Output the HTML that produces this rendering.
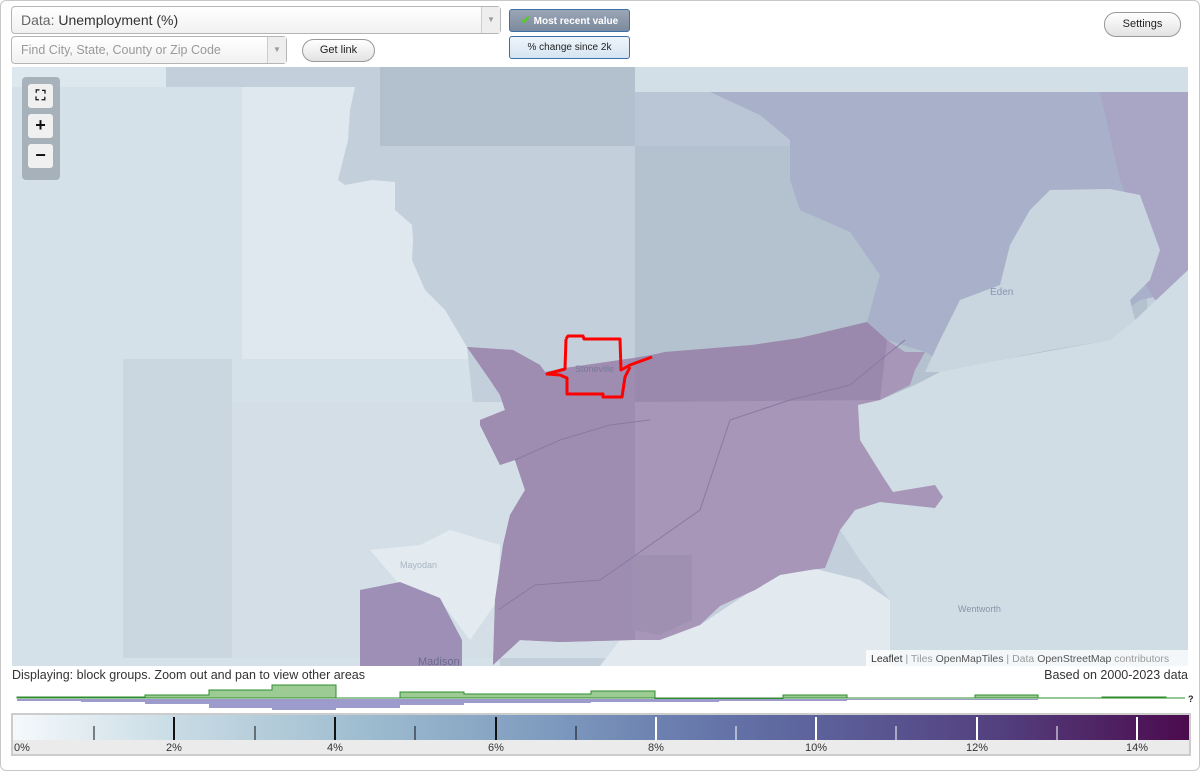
<!DOCTYPE html>
<html><head><meta charset="utf-8"><style>
*{box-sizing:border-box;margin:0;padding:0}
body{width:1200px;height:771px;background:#fff;font-family:"Liberation Sans",Arial,sans-serif;position:relative;overflow:hidden}
.frame{position:absolute;left:0;top:0;width:1200px;height:771px;border:1px solid #c8c8c8;border-radius:6px}
.sel{position:absolute;border:1px solid #b5b5b5;border-radius:4px;background:linear-gradient(#fff,#f1f1f1);font-size:14px;color:#333}
.arr{position:absolute;right:0;top:0;bottom:0;width:19px;border-left:1px solid #ccc;background:#eee;color:#999;font-size:8px;text-align:center}
.btn{position:absolute;border:1px solid #999;border-radius:12px;background:linear-gradient(#fff,#e2e2e2);font-size:11px;color:#222;text-align:center}
.tg{position:absolute;border:1px solid #3d6fa8;border-radius:3px;font-size:10px;text-align:center}
.zc{position:absolute;left:22px;top:77px;width:38px;height:103px;background:rgba(150,160,170,.75);border-radius:4px}
.zb{position:absolute;left:6px;width:25px;height:24px;background:#f0f0f0;border-radius:3px;text-align:center;font-weight:bold;font-size:18px;line-height:22px;color:#111}
</style></head><body>
<div class="frame"></div>
<div class="sel" style="left:11px;top:6px;width:490px;height:28px;line-height:26px;padding-left:9px"><span style="color:#666">Data:</span> Unemployment (%)<div class="arr" style="line-height:26px">▼</div></div>
<div class="sel" style="left:11px;top:36px;width:276px;height:28px;line-height:26px;padding-left:9px;font-size:12.5px;color:#999">Find City, State, County or Zip Code<div class="arr" style="line-height:26px">▼</div></div>
<div class="btn" style="left:302px;top:39px;width:73px;height:23px;line-height:21px">Get link</div>
<div class="tg" style="left:509px;top:9px;width:121px;height:23px;line-height:21px;background:linear-gradient(#9aa6b6,#7c8a9d);color:#fff;font-weight:bold"><span style="color:#5c2;font-size:12px">✔</span> Most recent value</div>
<div class="tg" style="left:509px;top:36px;width:121px;height:23px;line-height:21px;background:linear-gradient(#eef5fb,#d5e4f1);color:#222">% change since 2k</div>
<div class="btn" style="left:1104px;top:12px;width:77px;height:25px;line-height:23px">Settings</div>

<svg style="position:absolute;left:12px;top:67px" width="1176" height="599" viewBox="12 67 1176 599">
<rect x="12" y="67" width="1176" height="599" fill="#d5e1e9"/>
<rect x="12" y="67" width="154" height="20" fill="#dde7ee"/>
<rect x="242" y="87" width="260" height="272" fill="#dfe8ee"/>
<polygon points="166,67 1188,67 1188,666 500,666 467,347 445,310 425,290 412,260 413,240 412,225 395,210 395,182 372,180 345,185 338,180 348,140 350,110 355,87 166,87" fill="#c3d0dc"/>
<rect x="380" y="67" width="255" height="79" fill="#b3c0cd"/>
<rect x="635" y="67" width="553" height="25" fill="#d3dfe7"/>
<rect x="635" y="92" width="553" height="54" fill="#bac6d5"/>
<rect x="635" y="146" width="512" height="256" fill="#b4c1cf"/>
<polygon points="710,92 1188,92 1188,290 1140,300 1100,330 1050,345 940,360 925,352 887,340 867,322 880,275 850,232 800,210 790,180 790,140 760,115" fill="#a8b1c9"/>
<polygon points="1100,92 1188,92 1188,300 1175,295 1155,300 1140,275 1150,250 1120,180" fill="#a8a5c5"/>
<polygon points="1050,190 1110,189 1140,195 1160,250 1150,280 1130,300 1135,320 1110,340 1050,350 1000,360 950,372 925,372 940,340 960,300 1000,285 1010,245 1030,210" fill="#c9d6df"/>
<polygon points="940,372 1000,360 1110,340 1135,320 1188,270 1188,666 890,666 890,600 860,560 840,530 855,510 880,502 935,508 943,497 935,485 893,492 858,440 858,405 880,400 915,385" fill="#d1dde5"/>
<rect x="123" y="359" width="109" height="299" fill="#cad7e0"/>
<rect x="232" y="402" width="403" height="256" fill="#d3dee6"/>
<polygon points="620,640 700,625 760,585 800,565 860,580 890,600 890,666 600,666" fill="#e2eaf0"/>
<polygon points="370,550 420,545 450,530 500,545 498,600 470,640 440,600 400,585" fill="#e3ebf0"/>
<polygon points="467,347 513,350 540,365 545,372 565,368 620,360 652,355 665,352 752,345 800,338 867,322 887,340 905,352 925,352 915,370 910,385 880,400 858,405 860,440 885,480 893,492 935,485 943,497 935,508 880,502 855,510 840,530 825,568 810,570 780,575 755,590 720,606 700,625 660,640 630,640 560,642 520,640 493,665 495,600 503,545 510,515 525,490 515,460 500,465 480,425 480,420 505,410 500,395 490,380" fill="#a796b8"/>
<polygon points="467,347 513,350 540,365 545,372 565,368 620,360 635,358 635,640 560,642 520,640 493,665 495,600 503,545 510,515 525,490 515,460 500,465 480,425 480,420 505,410 500,395 490,380" fill="#9e8db0"/>
<polygon points="635,358 652,355 665,352 752,345 800,338 867,322 887,340 880,400 635,402" fill="#9a89ad"/>
<polygon points="360,590 400,582 440,598 462,640 462,666 360,666" fill="#9e8fb6"/>
<polygon points="632,555 692,555 692,620 660,635 632,630" fill="#9f90b2"/>
<path d="M515,460 L560,440 L610,425 L650,420" stroke="#8a7aa0" stroke-width="1" fill="none"/>
<path d="M498,610 L535,585 L600,580 L700,510 L730,420 L790,400 L850,385 L905,340" stroke="#8a7aa0" stroke-width="1" fill="none"/>
<path d="M566,339 L568,336 L583,336 L584,339 L620,339 L621,370 L630,365 L652,357 M630,367 L625,377 L622,397 L603,397 L603,394 L567,394 L567,378 L560,375 L547,374 L565,369 L566,339" stroke="#f00" stroke-width="3" fill="none" stroke-linejoin="round"/>
<text x="575" y="372" font-size="9" fill="#7a7a99" font-family="Liberation Sans">Stoneville</text>
<text x="990" y="295" font-size="10" fill="#8a94b0" font-family="Liberation Sans">Eden</text>
<text x="400" y="568" font-size="9" fill="#a8b4c0" font-family="Liberation Sans">Mayodan</text>
<text x="418" y="665" font-size="11" fill="#6a6a8a" font-family="Liberation Sans">Madison</text>
<text x="958" y="612" font-size="9" fill="#8a94a8" font-family="Liberation Sans">Wentworth</text>
<rect x="866" y="650" width="322" height="16" fill="rgba(255,255,255,.75)"/>
<text x="871" y="662" font-size="10.5" font-family="Liberation Sans" fill="#999"><tspan fill="#333">Leaflet</tspan> | Tiles <tspan fill="#555">OpenMapTiles</tspan> | Data <tspan fill="#555">OpenStreetMap</tspan> contributors</text>
</svg>
<div class="zc"><div class="zb" style="top:7px;font-size:14px">⛶</div><div class="zb" style="top:37px">+</div><div class="zb" style="top:67px">−</div></div>

<div style="position:absolute;left:12px;top:668px;font-size:12.5px;color:#333">Displaying: block groups. Zoom out and pan to view other areas</div>
<div style="position:absolute;right:12px;top:668px;font-size:12.5px;color:#333">Based on 2000-2023 data</div>

<svg style="position:absolute;left:0;top:680px" width="1200" height="36" viewBox="0 680 1200 36">
<path d="M17,698 L17,697 L145,697 L145,695 L209,695 L209,690 L272,690 L272,685 L336,685 L336,698 L400,698 L400,692 L464,692 L464,694 L591,694 L591,691 L655,691 L655,699 L783,699 L783,695 L847,695 L847,698 L975,698 L975,695 L1038,695 L1038,698 L1102,698 L1102,697 L1166,697 L1166,698 L1185,698 Z" fill="#9ccb94" stroke="#2e8b2e" stroke-width="1"/>
<path d="M17,699 L17,701 L81,701 L81,702 L145,702 L145,704 L209,704 L209,708 L272,708 L272,710 L336,710 L336,708 L400,708 L400,705 L464,705 L464,703 L591,703 L591,702 L719,702 L719,701 L847,701 L847,700 L1038,700 L1038,699 L1185,699 Z" fill="#9d9bcc"/>
<text x="1188" y="702" font-size="9" font-weight="bold" fill="#222" font-family="Liberation Sans">?</text>
</svg>

<div style="position:absolute;left:11px;top:713px;width:1180px;height:43px;border:2px solid #ccc;background:#ebebeb">
<div style="position:absolute;left:0;top:0;width:1176px;height:25px;background:linear-gradient(90deg,#f5f9fc 0%,#c8dbe4 14%,#9ebccf 30%,#7f9cbf 45%,#6474a9 60%,#5a5a95 72%,#533f7e 84%,#4b0b4d 100%)"></div>
</div>
<svg style="position:absolute;left:0;top:713px" width="1200" height="45" viewBox="0 713 1200 45" font-family="Liberation Sans" font-size="11" fill="#333">
<g stroke-width="2">
<line x1="174" y1="717" x2="174" y2="740" stroke="#111"/><line x1="335" y1="717" x2="335" y2="740" stroke="#111"/><line x1="496" y1="717" x2="496" y2="740" stroke="#111"/>
<line x1="656" y1="717" x2="656" y2="740" stroke="#fff"/><line x1="816" y1="717" x2="816" y2="740" stroke="#fff"/><line x1="977" y1="717" x2="977" y2="740" stroke="#fff"/><line x1="1137" y1="717" x2="1137" y2="740" stroke="#fff"/>
</g>
<g stroke-width="1">
<line x1="94" y1="726" x2="94" y2="740" stroke="#111"/><line x1="255" y1="726" x2="255" y2="740" stroke="#111"/><line x1="415" y1="726" x2="415" y2="740" stroke="#111"/><line x1="576" y1="726" x2="576" y2="740" stroke="#111"/>
<line x1="736" y1="726" x2="736" y2="740" stroke="#fff"/><line x1="896" y1="726" x2="896" y2="740" stroke="#fff"/><line x1="1057" y1="726" x2="1057" y2="740" stroke="#fff"/>
</g>
<text x="14" y="751">0%</text>
<text x="174" y="751" text-anchor="middle">2%</text><text x="335" y="751" text-anchor="middle">4%</text><text x="496" y="751" text-anchor="middle">6%</text><text x="656" y="751" text-anchor="middle">8%</text><text x="816" y="751" text-anchor="middle">10%</text><text x="977" y="751" text-anchor="middle">12%</text><text x="1137" y="751" text-anchor="middle">14%</text>
</svg>
</body></html>
